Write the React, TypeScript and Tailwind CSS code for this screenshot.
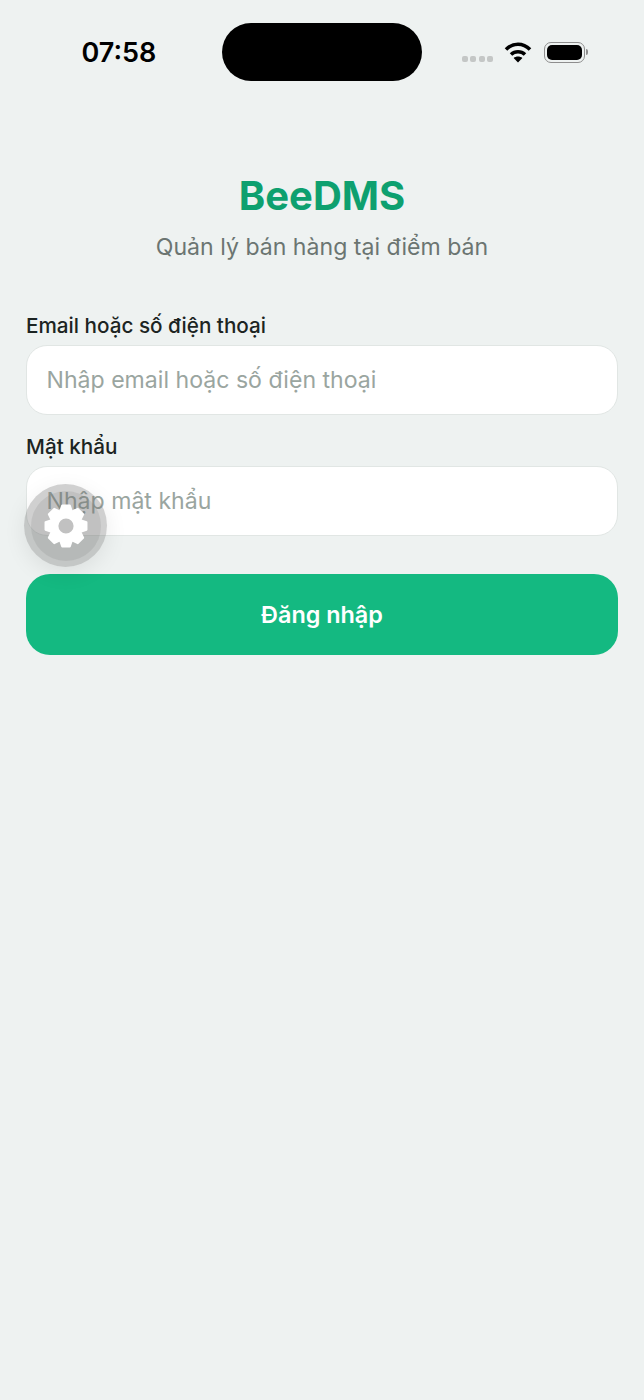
import { useState } from 'react';

// Login screen, captured on a phone at 2x-ish scale

function WifiIcon() {
  return (
    <svg width="28" height="22" viewBox="0 0 28 22" fill="none">
      <path d="M2 8.5 C9 1.5 19 1.5 26 8.5" stroke="#000" strokeWidth="3.6" />
      <path d="M7 13.5 C11 9.8 17 9.8 21 13.5" stroke="#000" strokeWidth="3.6" />
      <path d="M14 21.5 L9.6 17 C12 15 16 15 18.4 17 Z" fill="#000" />
    </svg>
  );
}

function BatteryIcon() {
  return (
    <div className="flex items-center">
      <div className="flex h-[21px] w-[41px] items-center justify-center rounded-[7px] border-[1.5px] border-[#8e8e8e]">
        <div className="h-[15px] w-[35px] rounded-[5px] bg-black" />
      </div>
      <div className="ml-[1px] h-[6px] w-[2px] rounded-r-full bg-[#8e8e8e]" />
    </div>
  );
}

function GearIcon() {
  const teeth = [0, 45, 90, 135, 180, 225, 270, 315];
  return (
    <svg width="44" height="44" viewBox="0 0 42 42">
      {teeth.map((a) => (
        <path
          key={a}
          d="M14.5 10 L17.4 1.5 H24.6 L27.5 10 Z"
          fill="#fff"
          stroke="#fff"
          strokeWidth="2"
          strokeLinejoin="round"
          transform={`rotate(${a} 21 21)`}
        />
      ))}
      <circle cx="21" cy="21" r="11.5" fill="none" stroke="#fff" strokeWidth="8.5" />
    </svg>
  );
}

function Field({ label, placeholder, type }: { label: string; placeholder: string; type?: string }) {
  const [value, setValue] = useState('');
  return (
    <div className="flex flex-col">
      <label className="h-[38px] text-[20.7px] leading-[38px] font-medium text-[#1c2422]">{label}</label>
      <input
        type={type ?? 'text'}
        value={value}
        onChange={(e) => setValue(e.target.value)}
        placeholder={placeholder}
        className="h-[70px] rounded-[21px] border-[1.5px] border-[#e1e6e4] bg-white px-[19.5px] text-[23.1px] text-[#1c2422] outline-none placeholder:text-[#9aa5a0]"
      />
    </div>
  );
}

export default function App() {
  return (
    <div className="relative h-[1400px] w-[644px] overflow-hidden bg-[#eef2f1] font-['Inter',sans-serif]">
      {/* status bar */}
      <div className="flex h-[81px] pt-[23px] pr-[56px] pl-[82px]">
        <span className="-ml-[0.5px] h-[58px] w-[140.5px] text-[27px] leading-[60px] font-semibold text-black">07:58</span>
        <div className="h-[58px] w-[200px] rounded-[29px] bg-black" />
        <div className="flex h-[58px] w-[166px] items-center justify-end">
          <div className="mt-[14px] mr-[11px] flex gap-[2.5px]">
            <span className="h-[6px] w-[6px] rounded-[2px] bg-[#c4c7c6]" />
            <span className="h-[6px] w-[6px] rounded-[2px] bg-[#c4c7c6]" />
            <span className="h-[6px] w-[6px] rounded-[2px] bg-[#c4c7c6]" />
            <span className="h-[6px] w-[6px] rounded-[2px] bg-[#c4c7c6]" />
          </div>
          <WifiIcon />
          <div className="ml-[12px]">
            <BatteryIcon />
          </div>
        </div>
      </div>

      <div className="flex flex-col px-[26px] pt-[90px]">
        {/* brand */}
        <div className="flex flex-col items-center">
          <h1 className="h-[48px] text-[40px] leading-[49px] font-bold text-[#0ea06f]">BeeDMS</h1>
          <p className="mt-[13px] h-[30px] text-[23.1px] leading-[30px] text-[#6b7571]">Quản lý bán hàng tại điểm bán</p>
        </div>

        {/* form */}
        <div className="mt-[45px] flex flex-col gap-[13px]">
          <Field label="Email hoặc số điện thoại" placeholder="Nhập email hoặc số điện thoại" />
          <Field label="Mật khẩu" placeholder="Nhập mật khẩu" type="password" />
        </div>

        <button className="mt-[38px] h-[81px] rounded-[24px] bg-[#14b981] text-[23.4px] font-semibold text-white">
          Đăng nhập
        </button>
      </div>

      {/* floating settings button */}
      <div className="absolute top-[484px] left-[24px] flex h-[83px] w-[83px] items-center justify-center rounded-full bg-[#6e6e6e]/32 shadow-[0_6px_22px_rgba(0,0,0,0.08)]">
        <div className="flex h-[70px] w-[70px] items-center justify-center rounded-full bg-[#6e6e6e]/15">
          <GearIcon />
        </div>
      </div>
    </div>
  );
}
